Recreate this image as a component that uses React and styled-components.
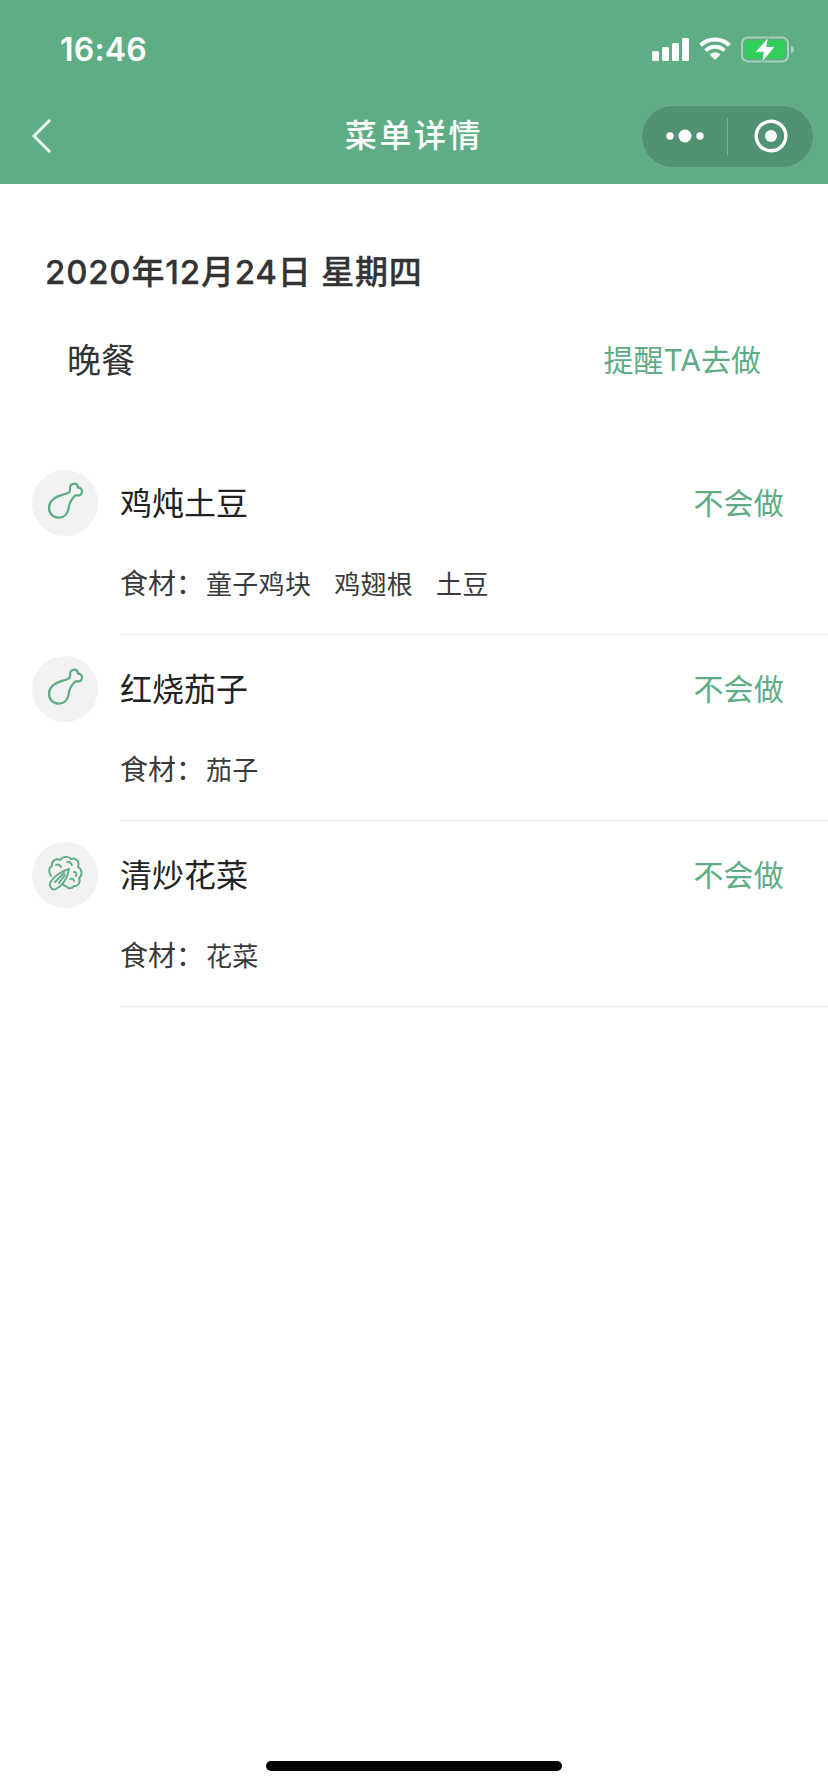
import styled, { createGlobalStyle } from "styled-components";

const GlobalStyle = createGlobalStyle`
  html, body {
    margin: 0;
    padding: 0;
    background: #fff;
  }
  body {
    font-family: Inter, "Noto Sans CJK SC", sans-serif;
  }
`;

const GREEN = "#5fad85";

const Page = styled.div`
  width: 828px;
  height: 1792px;
  display: flex;
  flex-direction: column;
  background: #fff;
  overflow: hidden;
`;

const Header = styled.header`
  background: ${GREEN};
  height: 184px;
  color: #fff;
`;

const StatusBar = styled.div`
  height: 96px;
  display: flex;
  align-items: center;
  justify-content: space-between;
  padding: 0 33px 0 60px;
  box-sizing: border-box;
`;

const Time = styled.span`
  font-size: 32px;
  font-weight: 600;
  letter-spacing: 0.2px;
  padding-top: 3px;
`;

const StatusIcons = styled.div`
  display: flex;
  align-items: center;
  gap: 10px;
`;

const NavBar = styled.div`
  height: 88px;
  display: flex;
  align-items: center;
  justify-content: space-between;
  padding: 0 14px 0 32px;
  position: relative;
`;

const NavTitle = styled.h1`
  position: absolute;
  left: 0;
  right: 0;
  top: 0;
  margin: 0;
  line-height: 80px;
  text-align: center;
  font-size: 32px;
  font-weight: 500;
  letter-spacing: 2.6px;
`;

const Capsule = styled.div`
  width: 173px;
  height: 63px;
  margin-top: -8px;
  box-sizing: border-box;
  border-radius: 32px;
  background: #519273;
  border: 1px solid rgba(255, 255, 255, 0.2);
  display: flex;
  align-items: center;
`;

const CapsuleSide = styled.div`
  flex: 1;
  height: 100%;
  display: flex;
  align-items: center;
  justify-content: center;
`;

const CapsuleDivider = styled.div`
  width: 1px;
  height: 37px;
  background: rgba(255, 255, 255, 0.25);
`;

const BackIcon = styled.svg`
  margin-top: -8px;
`;

const Main = styled.main`
  flex: 1;
  padding-top: 66px;
`;

const DateTitle = styled.h2`
  margin: 0 0 0 45px;
  font-size: 33px;
  line-height: 44px;
  font-weight: 500;
  letter-spacing: 0.8px;
  color: #333;
  -webkit-text-stroke: 0.3px #333;
`;

const MealRow = styled.div`
  display: flex;
  justify-content: space-between;
  align-items: center;
  padding: 0 67px;
  margin-top: 42px;
  height: 44px;
`;

const MealName = styled.span`
  font-size: 34px;
  color: #333;
`;

const Remind = styled.span`
  font-size: 30px;
  color: ${GREEN};
`;

const DishList = styled.ul`
  list-style: none;
  margin: 90px 0 0;
  padding: 0;
`;

const Dish = styled.li`
  display: flex;
  padding-left: 32px;
  height: 186px;
  box-sizing: border-box;
`;

const IconCircle = styled.div`
  width: 66px;
  height: 66px;
  flex: none;
  border-radius: 50%;
  background: #f2f2f2;
  display: flex;
  align-items: center;
  justify-content: center;
`;

const DishBody = styled.div`
  flex: 1;
  margin-left: 22px;
  padding-right: 44px;
  border-bottom: 1px solid #ececec;
  height: 164px;
`;

const DishTop = styled.div`
  display: flex;
  justify-content: space-between;
  align-items: center;
  height: 62px;
`;

const DishName = styled.span`
  font-size: 32px;
  color: #222;
`;

const CantCook = styled.span`
  font-size: 30px;
  letter-spacing: 0.2px;
  color: ${GREEN};
`;

const Ingredients = styled.div`
  display: flex;
  align-items: baseline;
  margin-top: 30px;
  height: 40px;
  color: #3a3a3a;
`;

const Label = styled.span`
  font-size: 28px;
  width: 86px;
  flex: none;
`;

const Ingredient = styled.span`
  font-size: 26px;
  letter-spacing: 0.3px;
  margin-right: 23px;
`;

const HomeBar = styled.div`
  width: 296px;
  height: 10px;
  border-radius: 5px;
  background: #000;
  margin: 0 auto 21px;
`;

const Signal = () => (
  <svg width="37" height="28" viewBox="0 0 37 28" fill="#fff">
    <rect x="0" y="17" width="7" height="10" rx="1.5" />
    <rect x="10" y="13" width="7" height="14" rx="1.5" />
    <rect x="20" y="9" width="7" height="18" rx="1.5" />
    <rect x="30" y="4" width="7" height="23" rx="1.5" />
  </svg>
);

const Wifi = () => (
  <svg width="32" height="26" viewBox="0 0 32 26" fill="none" stroke="#fff" strokeWidth="4">
    <path d="M1.6 10.2C9.6 2.6 22.4 2.6 30.4 10.2" />
    <path d="M6.6 15.6C12 10.6 20 10.6 25.4 15.6" />
    <path d="M16 25l-5.4-5.6c3-2.6 7.8-2.6 10.8 0z" fill="#fff" stroke="none" />
  </svg>
);

const Battery = () => (
  <svg width="54" height="30" viewBox="0 0 54 30" fill="none">
    <rect x="1" y="4.5" width="46" height="24" rx="6" stroke="#fff" strokeOpacity="0.45" strokeWidth="2" />
    <rect x="4" y="7.5" width="40" height="18" rx="3" fill="#30d158" />
    <path d="M50 13c2 .4 3 1.8 3 3.5s-1 3.1-3 3.5z" fill="#fff" fillOpacity="0.45" />
    <path d="M27.3 4.3L14 19.3H22.3L20.7 29.7L34 13.7H25.7Z" fill="#fff" stroke={GREEN} strokeWidth="0.8" />
  </svg>
);

const Drumstick = () => (
  <svg width="66" height="66" viewBox="0 0 66 66" fill="none" stroke={GREEN} strokeWidth="2.3" strokeLinejoin="round">
    <path d="M37.5 22C33 25 27 25 23 28C19 30.5 17 34 17 38C17 43.5 21 47.7 27 47.7C32 47.7 35.5 44 36.5 39C37 35 38 31 41 28C42 26.5 43 25 45 25.2C47.5 26 50 24.5 50 21.5C50 19 48 17.5 45.8 17.5C46 15 44.5 13.5 42 13.6C39 13.8 37.5 16.5 38.2 19Z" />
  </svg>
);

const Cauliflower = () => (
  <svg width="66" height="66" viewBox="0 0 66 66" fill="none" stroke={GREEN} strokeWidth="1.9" strokeLinecap="round" strokeLinejoin="round">
    <path d="M19 34C16 30 17 25 20 24C19 19 24 16 28 18C31 14 37 14 39 17C44 15 48 20 46 25C50 27 51 33 47 36C49 40 46 45 42 44C40 47 36 47 34 44C32 44 31 43 31 41" />
    <path d="M24 23C26 22 28 23 29 25M35 20C37 19 39 21 40 23M42 30C44 30 45 32 44 34M38 37C40 36 42 37 42 39" />
    <path d="M37 27C30 29 22 34 18.5 40C16.5 44 20 49 24 47C30 44 36 36 37 27Z" />
    <path d="M23 40L32 31M27 41L33 33" />
  </svg>
);

const dishes = [
  { name: "鸡炖土豆", icon: <Drumstick />, items: ["童子鸡块", "鸡翅根", "土豆"] },
  { name: "红烧茄子", icon: <Drumstick />, items: ["茄子"] },
  { name: "清炒花菜", icon: <Cauliflower />, items: ["花菜"] },
];

export default function App() {
  return (
    <Page>
      <GlobalStyle />
      <Header>
        <StatusBar>
          <Time>16:46</Time>
          <StatusIcons>
            <Signal />
            <Wifi />
            <Battery />
          </StatusIcons>
        </StatusBar>
        <NavBar>
          <BackIcon width="20" height="36" viewBox="0 0 20 36" fill="none" stroke="#fff" strokeWidth="2.8">
            <path d="M18 2L2 18l16 16" />
          </BackIcon>
          <NavTitle>菜单详情</NavTitle>
          <Capsule>
            <CapsuleSide>
              <svg width="38" height="14" viewBox="0 0 38 14" fill="#fff">
                <circle cx="4" cy="7" r="3.7" />
                <circle cx="19" cy="7" r="6.5" />
                <circle cx="34" cy="7" r="3.7" />
              </svg>
            </CapsuleSide>
            <CapsuleDivider />
            <CapsuleSide>
              <svg width="34" height="34" viewBox="0 0 34 34">
                <circle cx="17" cy="17" r="14.8" fill="none" stroke="#fff" strokeWidth="3.4" />
                <circle cx="17" cy="17" r="6" fill="#fff" />
              </svg>
            </CapsuleSide>
          </Capsule>
        </NavBar>
      </Header>
      <Main>
        <DateTitle>2020年12月24日 星期四</DateTitle>
        <MealRow>
          <MealName>晚餐</MealName>
          <Remind>提醒TA去做</Remind>
        </MealRow>
        <DishList>
          {dishes.map((dish) => (
            <Dish key={dish.name}>
              <IconCircle>{dish.icon}</IconCircle>
              <DishBody>
                <DishTop>
                  <DishName>{dish.name}</DishName>
                  <CantCook>不会做</CantCook>
                </DishTop>
                <Ingredients>
                  <Label>食材：</Label>
                  {dish.items.map((item) => (
                    <Ingredient key={item}>{item}</Ingredient>
                  ))}
                </Ingredients>
              </DishBody>
            </Dish>
          ))}
        </DishList>
      </Main>
      <HomeBar />
    </Page>
  );
}
